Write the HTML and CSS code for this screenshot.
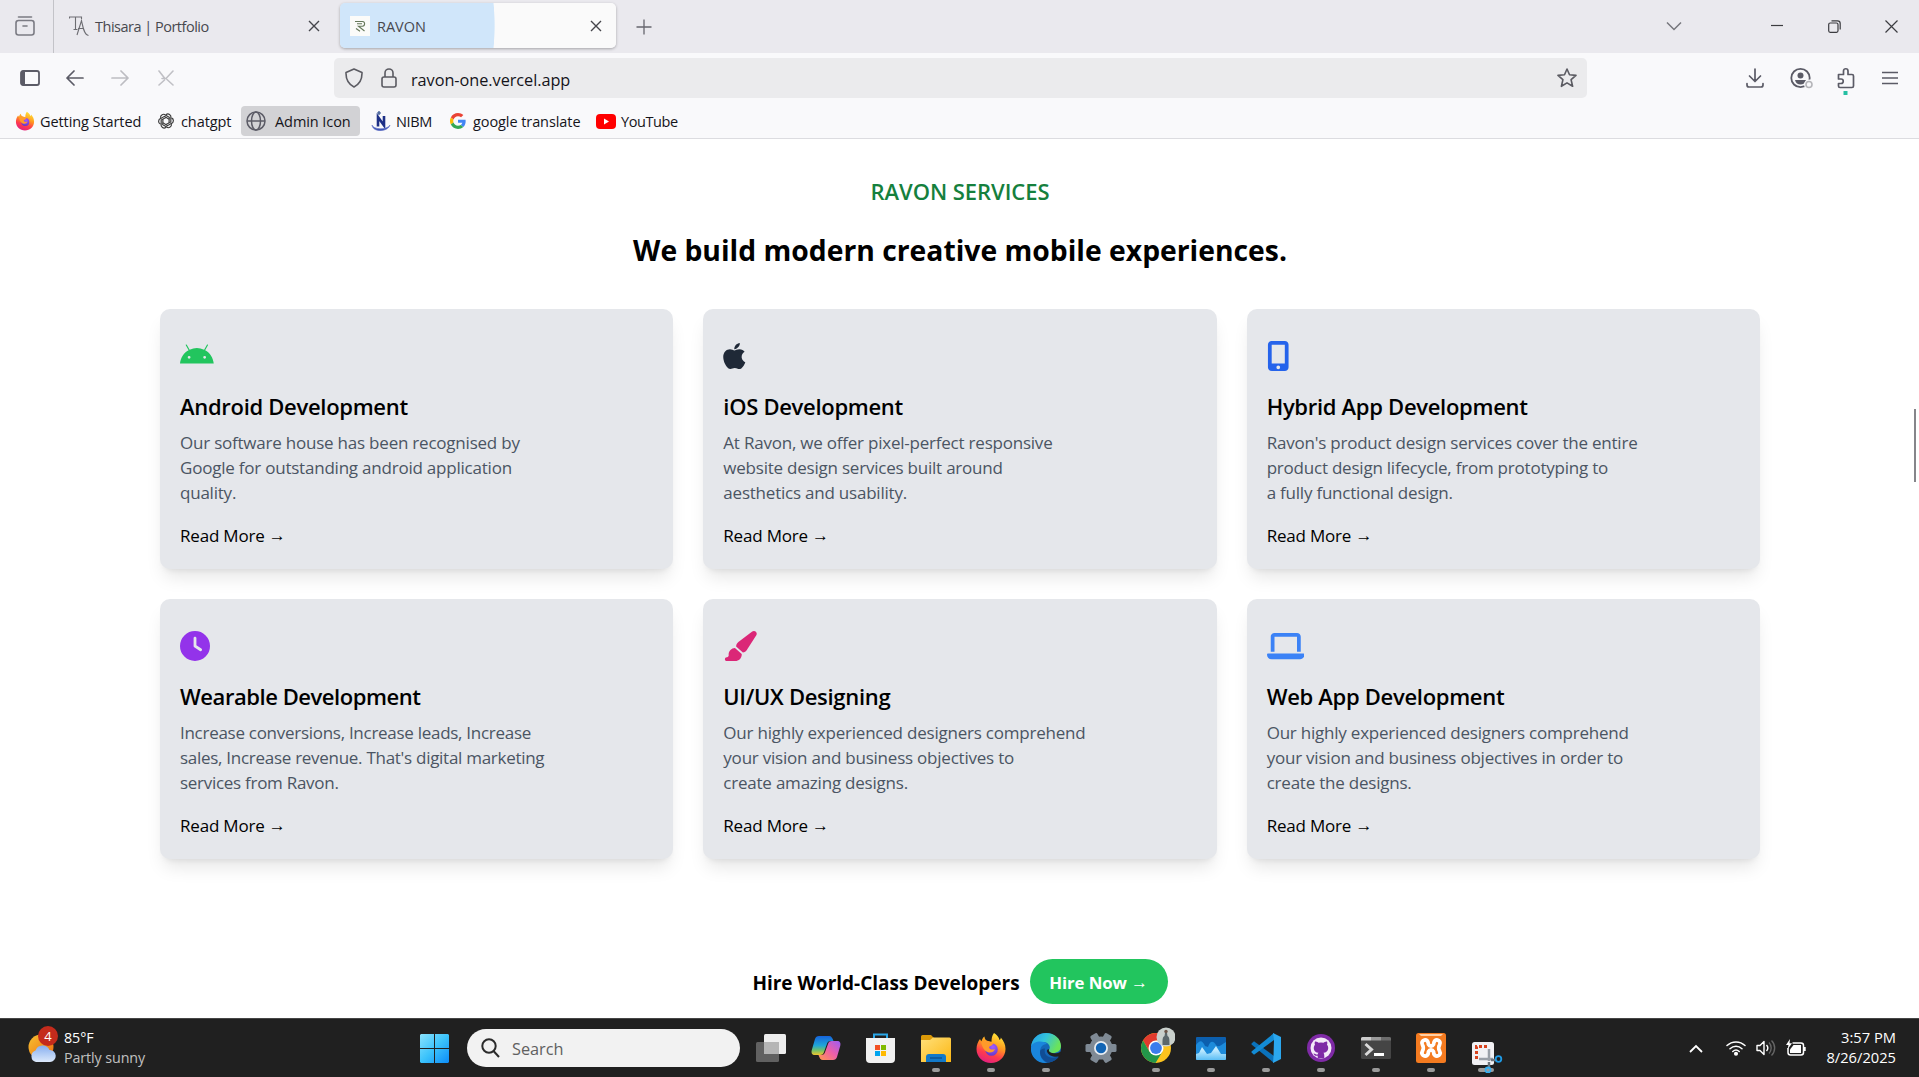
FILE: index.html
```html
<!DOCTYPE html>
<html lang="en">
<head>
<meta charset="utf-8">
<title>RAVON</title>
<link rel="stylesheet" href="styles.css">
</head>
<body>
<svg class="defs" width="0" height="0">
  <defs>
    <linearGradient id="gFire" x1="0.7" y1="0" x2="0.3" y2="1"><stop offset="0" stop-color="#ffe83a"/><stop offset=".4" stop-color="#ff9a1f"/><stop offset=".7" stop-color="#ff3c4c"/><stop offset="1" stop-color="#e01d84"/></linearGradient>
    <radialGradient id="gGlobe" cx=".6" cy=".3" r=".8"><stop offset="0" stop-color="#a35bff"/><stop offset="1" stop-color="#5b35c4"/></radialGradient>
    <symbol id="firefox" viewBox="0 0 30 32">
      <path fill="url(#gFire)" d="M18 1c3 2 5 4 5.500 7 1-.5 1.300-1.500 1.300-2.500 3 3.500 4.700 7 4.700 11.500C29.500 25 23 31 15 31S.5 25 .5 17c0-4 1.500-7.500 3.500-10 .3 1 .8 1.800 1.600 2.200C6 7 7 5.500 8.500 4.500c0 2 1 3.500 3 4.500l4 .7C15.500 6.500 16 3.500 18 1z"/>
      <circle cx="15.500" cy="17.500" r="6.300" fill="url(#gGlobe)"/>
      <path fill="#ff9a2a" d="M5 10.500c3-2.500 7.500-2 9.500 0l3 .8c-1 2.200-3 2.700-4 3.200-.8.500-.5 2 1 2.700 1.500.6 3 .2 4.500-.3-1 3.500-5.500 4.500-8.500 2.600C7 17.500 6 13 5 10.500z"/>
    </symbol>
  </defs>
</svg>

<div class="tabstrip">
  <div class="view-btn">
    <svg width="20" height="20" viewBox="0 0 20 20" fill="none" stroke="#7b7b83" stroke-width="1.600" stroke-linecap="round"><path d="M3.500 1h13"/><rect x="1" y="4.500" width="18" height="14.500" rx="2.500"/><path d="M8 10h4"/></svg>
  </div>
  <div class="tab">
    <svg width="20" height="22" viewBox="0 0 20 22" fill="none" stroke="#6d6d72" stroke-width="1.100"><path d="M.5 3.500V2h12v2M6.500 2v12M4.500 14.500h4M8 20l4.500-14.500C14 12 15 20 19.500 20.500M9 13.500h6"/></svg>
    <span class="tab-label">Thisara | Portfolio</span>
    <svg class="close" width="12" height="12" viewBox="0 0 12 12" stroke="#45454b" stroke-width="1.400"><path d="M1 1l10 10M11 1L1 11"/></svg>
  </div>
  <div class="tab active">
    <svg width="20" height="20" viewBox="0 0 20 20" fill="none" stroke="#66785a" stroke-width="1.100"><rect width="20" height="20" fill="#fbfbf9" stroke="none"/><path d="M5 5.500h7.500c2.800 0 2.800 4.700 0 4.700H8.500l6 4.800M7 7.800h5M6 12.500l4 2.700"/></svg>
    <span class="tab-label">RAVON</span>
    <svg class="close" width="12" height="12" viewBox="0 0 12 12" stroke="#45454b" stroke-width="1.400"><path d="M1 1l10 10M11 1L1 11"/></svg>
  </div>
  <svg class="plus" width="16" height="16" viewBox="0 0 16 16" stroke="#66666e" stroke-width="1.300"><path d="M8 .5v15M.5 8h15"/></svg>
  <div class="win">
    <svg width="16" height="10" viewBox="0 0 16 10" fill="none" stroke="#76767c" stroke-width="1.500"><path d="M1 1.500l7 7 7-7"/></svg>
    <svg class="w-min" width="12" height="12" viewBox="0 0 12 12" stroke="#3c3c40" stroke-width="1.200"><path d="M0 5.500h12"/></svg>
    <svg width="13" height="13" viewBox="0 0 13 13" fill="none" stroke="#3c3c40" stroke-width="1.200"><rect x=".7" y="3" width="9.300" height="9.300" rx="1.500"/><path d="M3.500.8H9.500a2.700 2.700 0 0 1 2.700 2.700v6"/></svg>
    <svg width="13" height="13" viewBox="0 0 13 13" stroke="#3c3c40" stroke-width="1.200"><path d="M.5.500l12 12M12.500.500l-12 12"/></svg>
  </div>
</div>

<div class="toolbar">
  <div class="nav">
    <svg width="20" height="16" viewBox="0 0 20 16" fill="none" stroke="#5b5b66" stroke-width="1.800"><rect x="1" y="1" width="18" height="14" rx="2"/><path d="M3 1.500v13" stroke-width="4"/></svg>
    <svg width="18" height="16" viewBox="0 0 18 16" fill="none" stroke="#5b5b66" stroke-width="1.700" stroke-linecap="round" stroke-linejoin="round"><path d="M17 8H1M8 1L1 8l7 7"/></svg>
    <svg width="18" height="16" viewBox="0 0 18 16" fill="none" stroke="#bdbdc2" stroke-width="1.700" stroke-linecap="round" stroke-linejoin="round"><path d="M1 8h16M10 1l7 7-7 7"/></svg>
    <svg width="16" height="16" viewBox="0 0 16 16" fill="none" stroke="#c0c0c5" stroke-width="1.600" stroke-linecap="round"><path d="M1 1l5.500 7M9 9.500l6 5.500M15 1L8 8.500H4M6.500 10L1 15"/></svg>
  </div>
  <div class="urlbar">
    <svg width="18" height="20" viewBox="0 0 18 20" fill="none" stroke="#5b5b62" stroke-width="1.600" stroke-linejoin="round"><path d="M9 1l8 3.500c.2 6-2 11.500-8 14.500C3 16 .8 10.500 1 4.500z"/></svg>
    <svg class="lock" width="16" height="20" viewBox="0 0 16 20" fill="none" stroke="#5b5b62" stroke-width="1.600"><rect x="1" y="9" width="14" height="10" rx="2"/><path d="M4 9V5a4 4 0 0 1 8 0v4"/></svg>
    <span class="url">ravon-one.vercel.app</span>
    <svg class="star" width="20" height="20" viewBox="0 0 20 20" fill="none" stroke="#5b5b62" stroke-width="1.600" stroke-linejoin="round"><path d="M10 1l2.500 5.800 6.500.6-4.900 4.300 1.500 6.600-5.600-3.400-5.600 3.400 1.500-6.600L1 7.400l6.500-.6z"/></svg>
  </div>
  <div class="tools">
    <svg width="18" height="20" viewBox="0 0 18 20" fill="none" stroke="#5b5b66" stroke-width="1.700" stroke-linecap="round" stroke-linejoin="round"><path d="M9 1v12M3.500 8L9 13.500 14.500 8M1 15.500v1.500a2 2 0 0 0 2 2h12a2 2 0 0 0 2-2v-1.500"/></svg>
    <svg width="24" height="22" viewBox="0 0 24 22" fill="none"><circle cx="10.500" cy="11" r="9.200" stroke="#5b5b66" stroke-width="1.800"/><circle cx="10.500" cy="8.500" r="3" fill="#5b5b66"/><path d="M5 13h11c-.5 3-3 4.500-5.500 4.500S5.500 16 5 13z" fill="#5b5b66"/><circle cx="19" cy="17.500" r="5" fill="#f9f9fb"/><circle cx="19" cy="17.500" r="3" stroke="#b5b5b9" stroke-width="1.600"/></svg>
    <svg width="18" height="28" viewBox="0 0 18 28" fill="none" stroke="#5b5b66" stroke-width="1.700" stroke-linejoin="round"><path d="M1.500 7.500h5V4a2.200 2.200 0 0 1 4.500 0v3.500h4a1.500 1.500 0 0 1 1.500 1.500v10a1.500 1.500 0 0 1-1.500 1.500H3A1.500 1.500 0 0 1 1.500 19v-2.500H4a2.200 2.200 0 0 0 0-4.500H1.500z"/><rect x="6.500" y="24" width="4" height="4" fill="#26bfa3" stroke="none"/></svg>
    <svg width="16" height="14" viewBox="0 0 16 14" stroke="#5b5b66" stroke-width="1.500"><path d="M0 1.500h16M0 7h16M0 12.500h16"/></svg>
  </div>
</div>

<div class="bookmarks">
  <div class="bm bm-1"><svg width="20" height="20"><use href="#firefox"/></svg><span>Getting Started</span></div>
  <div class="bm bm-2"><svg width="20" height="20" viewBox="-2 -2 24 24" fill="none" stroke="#3a3a3a" stroke-width="1.400"><g id="petal"><path d="M10 2.500a3.600 3.600 0 0 1 5.800 3.700v5L10 14.200"/></g><use href="#petal" transform="rotate(60 10 10)"/><use href="#petal" transform="rotate(120 10 10)"/><use href="#petal" transform="rotate(180 10 10)"/><use href="#petal" transform="rotate(240 10 10)"/><use href="#petal" transform="rotate(300 10 10)"/></svg><span>chatgpt</span></div>
  <div class="bm bm-3"><svg width="20" height="20" viewBox="0 0 20 20" fill="none" stroke="#5b5b66" stroke-width="1.500"><circle cx="10" cy="10" r="9"/><ellipse cx="10" cy="10" rx="4.500" ry="9"/><path d="M1 10h18"/></svg><span>Admin Icon</span></div>
  <div class="bm bm-4"><svg width="20" height="20" viewBox="0 0 20 20"><path d="M7 15.500V6l6 8.500V5" fill="none" stroke="#1d2f86" stroke-width="2.600"/><path d="M8 0v4M6 2h4" stroke="#2b4a8a" stroke-width="1.200"/><path d="M1 14c1 4.500 15 5.500 18 0-2 7-17 8-18 0z" fill="#3f55b5" stroke="#5a6cc4" stroke-width=".6"/></svg><span>NIBM</span></div>
  <div class="bm bm-5"><svg width="16" height="16" viewBox="0 0 48 48"><path fill="#ea4335" d="M24 9.500c3.500 0 6.700 1.200 9.200 3.600l6.900-6.900C35.900 2.400 30.500 0 24 0 14.600 0 6.500 5.400 2.600 13.200l8 6.200C12.400 13.700 17.700 9.500 24 9.500z"/><path fill="#4285f4" d="M47 24.500c0-1.600-.2-3.100-.4-4.500H24v9h12.900c-.6 3-2.200 5.500-4.700 7.200l7.700 6C44.400 38 47 31.800 47 24.500z"/><path fill="#fbbc05" d="M10.500 28.600a14.500 14.500 0 0 1 0-9.200l-8-6.200a24 24 0 0 0 0 21.600z"/><path fill="#34a853" d="M24 48c6.500 0 11.900-2.100 15.900-5.800l-7.700-6c-2.200 1.500-4.900 2.300-8.200 2.300-6.300 0-11.600-4.200-13.500-9.900l-8 6.200C6.500 42.600 14.600 48 24 48z"/></svg><span>google translate</span></div>
  <div class="bm bm-6"><svg width="20" height="15" viewBox="0 0 20 15"><rect width="20" height="15" rx="4" fill="#f00"/><path d="M8 4.500v6l5-3z" fill="#fff"/></svg><span>YouTube</span></div>
</div>

<main class="page">
  <div class="eyebrow">RAVON SERVICES</div>
  <h1 class="headline">We build modern creative mobile experiences.</h1>
  <section class="grid">
    <article class="card">
      <svg class="icon android" viewBox="0 0 576 512"><path d="M420.550,301.930a24,24,0,1,1,24-24,24,24,0,0,1-24,24m-265.100,0a24,24,0,1,1,24-24,24,24,0,0,1-24,24m273.700-144.480,47.940-83a10,10,0,1,0-17.270-10h0l-48.540,84.070a301.250,301.250,0,0,0-246.560,0L116.180,64.450a10,10,0,1,0-17.270,10h0l47.940,83C64.530,202.220,8.240,285.550,0,384H576c-8.240-98.450-64.540-181.780-146.850-226.550"/></svg>
      <h2>Android Development</h2>
      <p>Our software house has been recognised by<br>Google for outstanding android application<br>quality.</p>
      <a>Read More <span class="arr">→</span></a>
    </article>
    <article class="card">
      <svg class="icon apple" viewBox="0 0 384 512"><path d="M318.700 268.700c-.2-36.700 16.400-64.400 50-84.800-18.800-26.900-47.200-41.700-84.700-44.600-35.500-2.800-74.300 20.700-88.500 20.700-15 0-49.400-19.700-76.400-19.700C63.300 141.200 4 184.800 4 273.500q0 39.300 14.400 81.200c12.800 36.700 59 126.700 107.200 125.200 25.200-.6 43-17.900 75.800-17.900 31.800 0 48.300 17.900 76.400 17.900 48.600-.7 90.400-82.500 102.600-119.300-65.200-30.700-61.700-90-61.700-91.900zm-56.600-164.200c27.300-32.400 24.800-61.900 24-72.500-24.100 1.400-52 16.400-67.900 34.900-17.500 19.800-27.800 44.300-25.600 71.900 26.100 2 49.900-11.400 69.500-34.300z"/></svg>
      <h2>iOS Development</h2>
      <p>At Ravon, we offer pixel-perfect responsive<br>website design services built around<br>aesthetics and usability.</p>
      <a>Read More <span class="arr">→</span></a>
    </article>
    <article class="card">
      <svg class="icon mobile" viewBox="0 0 384 512"><path d="M16 64C16 28.700 44.700 0 80 0H304c35.300 0 64 28.700 64 64V448c0 35.300-28.700 64-64 64H80c-35.300 0-64-28.700-64-64V64zM224 448a32 32 0 1 0 -64 0 32 32 0 1 0 64 0zM304 64H80V384H304V64z"/></svg>
      <h2>Hybrid App Development</h2>
      <p>Ravon's product design services cover the entire<br>product design lifecycle, from prototyping to<br>a fully functional design.</p>
      <a>Read More <span class="arr">→</span></a>
    </article>
    <article class="card">
      <svg class="icon clock" viewBox="0 0 512 512"><path d="M256 0a256 256 0 1 1 0 512A256 256 0 1 1 256 0zM232 120V256c0 8 4 15.500 10.700 20l96 64c11 7.400 25.900 4.400 33.300-6.700s4.400-25.900-6.700-33.300L280 243.200V120c0-13.300-10.700-24-24-24s-24 10.700-24 24z"/></svg>
      <h2 class="tight">Wearable Development</h2>
      <p class="tight">Increase conversions, Increase leads, Increase<br>sales, Increase revenue. That's digital marketing<br>services from Ravon.</p>
      <a>Read More <span class="arr">→</span></a>
    </article>
    <article class="card">
      <svg class="icon brush" viewBox="0 0 576 512"><path d="M339.300 367.100c27.300-3.900 51.900-19.400 67.200-42.900L568.200 74.100c12.600-19.500 9.400-45.300-7.600-61.200S517.700-4.400 499.100 9.600L262.400 187.200c-24 18-38.200 46.100-38.400 76.100L339.300 367.100zm-19.600 25.400l-116-104.400C143.900 290.300 96 339.600 96 400c0 3.900 .2 7.800 .6 11.600C98.400 429.100 86.400 448 68.800 448H64c-17.700 0-32 14.300-32 32s14.300 32 32 32H208c61.900 0 112-50.100 112-112c0-2.500-.1-5-.2-7.500z"/></svg>
      <h2>UI/UX Designing</h2>
      <p>Our highly experienced designers comprehend<br>your vision and business objectives to<br>create amazing designs.</p>
      <a>Read More <span class="arr">→</span></a>
    </article>
    <article class="card">
      <svg class="icon laptop" viewBox="0 0 640 512"><path d="M128 32C92.700 32 64 60.700 64 96V352h64V96H512V352h64V96c0-35.300-28.700-64-64-64H128zM19.200 384C8.600 384 0 392.600 0 403.200C0 445.600 34.400 480 76.800 480H563.200c42.400 0 76.800-34.400 76.800-76.800c0-10.600-8.600-19.200-19.200-19.200H19.200z"/></svg>
      <h2>Web App Development</h2>
      <p>Our highly experienced designers comprehend<br>your vision and business objectives in order to<br>create the designs.</p>
      <a>Read More <span class="arr">→</span></a>
    </article>
  </section>
  <div class="hire">
    <span class="hire-text">Hire World-Class Developers</span>
    <button class="hire-btn">Hire Now <span class="arr">→</span></button>
  </div>
  <div class="scroll-thumb"></div>
</main>

<footer class="taskbar">
  <div class="weather">
    <div class="weather-icon">
      <svg width="28" height="30" viewBox="0 0 28 30"><defs><linearGradient id="sun" x1="0" y1="0" x2="1" y2="1"><stop offset="0" stop-color="#f5c131"/><stop offset="1" stop-color="#f0690f"/></linearGradient><linearGradient id="cl" x1="0" y1="0" x2="0" y2="1"><stop offset="0" stop-color="#86aef0"/><stop offset="1" stop-color="#dce9fb"/></linearGradient></defs><circle cx="13" cy="14" r="12.500" fill="url(#sun)"/><path d="M8 29a6 6 0 0 1-.5-11.500 7.500 7.500 0 0 1 14-.5A6 6 0 0 1 22 29z" fill="url(#cl)"/></svg>
      <span class="badge">4</span>
    </div>
    <div class="weather-text"><span>85°F</span><span class="dim">Partly sunny</span></div>
  </div>
  <svg class="start" width="29" height="29" viewBox="0 0 29 29"><defs><linearGradient id="win" gradientUnits="userSpaceOnUse" x1="0" y1="0" x2="29" y2="29"><stop offset="0" stop-color="#8be3fd"/><stop offset=".5" stop-color="#3cc3fb"/><stop offset="1" stop-color="#0c8cf8"/></linearGradient></defs><path fill="url(#win)" d="M1 0h13v14H0V1zM15 0h13l1 1v13H15zM0 15h14v14H1l-1-1zM15 15h14v13l-1 1H15z"/></svg>
  <div class="search">
    <svg width="19" height="20" viewBox="0 0 19 20" fill="none" stroke="#2b2b2b" stroke-width="2"><circle cx="8" cy="8" r="6.700"/><path d="M12.500 13l5.500 6"/></svg>
    <span>Search</span>
  </div>
  <div class="apps">
    <div class="app"><svg width="32" height="32" viewBox="0 0 32 32"><rect x="9" y="2" width="22" height="20" rx="1.500" fill="#ededed"/><rect x="1" y="10" width="23" height="20" rx="1.500" fill="#777" fill-opacity=".75"/><path d="M9 10h15v12H9z" fill="#b5b5b5"/></svg></div>
    <div class="app"><svg width="32" height="32" viewBox="0 0 32 32"><defs><linearGradient id="cpA" x1="0" y1="0" x2="0" y2="1"><stop offset="0" stop-color="#1663dc"/><stop offset=".5" stop-color="#1fa6d8"/><stop offset=".75" stop-color="#6fc06b"/><stop offset="1" stop-color="#f0c52c"/></linearGradient><linearGradient id="cpB" x1="1" y1="0" x2="0" y2="1"><stop offset="0" stop-color="#9b5cf5"/><stop offset=".5" stop-color="#ee5fa8"/><stop offset="1" stop-color="#ff9a4a"/></linearGradient></defs><path d="M9 4h10c2.500 0 3.500 2 4.500 5h-3c-2 0-3 1-3.600 3L14 20c-.6 2-1.500 3-4 3H5c-3 0-4-2-3.200-5L5 7c.6-2 2-3 4-3z" fill="url(#cpA)"/><path d="M23 28H13c-2.500 0-3.500-2-4.500-5h3c2 0 3-1 3.600-3L18 12c.6-2 1.500-3 4-3h5c3 0 4 2 3.200 5L27 25c-.6 2-2 3-4 3z" fill="url(#cpB)"/></svg></div>
    <div class="app"><svg width="32" height="32" viewBox="0 0 32 32"><path d="M9 8V2.500h13V8" fill="none" stroke="#2aa7e8" stroke-width="2"/><path d="M1 6h29v21a4 4 0 0 1-4 4H5a4 4 0 0 1-4-4z" fill="#f1f1f1"/><path fill="#f25022" d="M10 13h5v5h-5z"/><path fill="#7fba00" d="M16 13h5v5h-5z"/><path fill="#00a4ef" d="M10 19h5v5h-5z"/><path fill="#ffb900" d="M16 19h5v5h-5z"/></svg></div>
    <div class="app on"><svg width="32" height="32" viewBox="0 0 32 32"><defs><linearGradient id="fo" x1="0" y1="0" x2="1" y2="1"><stop offset="0" stop-color="#ffe07a"/><stop offset="1" stop-color="#fcb713"/></linearGradient></defs><path d="M1 4.500A1.500 1.500 0 0 1 2.500 3H11l3 3v6H1z" fill="#dc9a08"/><path d="M1 8h9l3-2.500h16.500A1.500 1.500 0 0 1 31 7v23H1z" fill="url(#fo)"/><path d="M6 30v-5a3 3 0 0 1 3-3h14a3 3 0 0 1 3 3v5z" fill="#1279c9"/><path d="M10 26h12" stroke="#0b4c8c" stroke-width="1.300"/></svg></div>
    <div class="app on"><svg width="30" height="32"><use href="#firefox"/></svg></div>
    <div class="app on"><svg width="32" height="32" viewBox="0 0 32 32"><defs><linearGradient id="eg" x1="0" y1="0" x2="1" y2=".4"><stop offset="0" stop-color="#239be8"/><stop offset=".5" stop-color="#33c3dc"/><stop offset="1" stop-color="#6be35a"/></linearGradient></defs><circle cx="16" cy="16" r="15" fill="#1467b8"/><path d="M1 15C2 6 8 1 16 1c9 0 15 6 15 13 0 5-4 7-8 7-3 0-5-1-4-3 2-3 0-8-6-8C7 10 2 12 1 15z" fill="url(#eg)"/><path d="M1 15c2-6 12-7 16-3-5 0-7 4-7 8 0 5 3 9 7 11C8 32 0 25 1 15z" fill="#1a86dc"/><path d="M10 20c0 5 4 10 9 10.600 4-.5 8-3 10-6-8 3-16 0-14-8-3 0-5 1.500-5 3.400z" fill="#104d95"/><path d="M19 17.500c-1 3 4 4.500 9 3.500l4-2-1.500 5c-5 2-12 0-13.500-4.500-.4-1.500 1-3 2-2z" fill="#202020"/></svg></div>
    <div class="app"><svg width="32" height="32" viewBox="0 0 32 32"><g fill="#7f8a95"><circle cx="16" cy="16" r="11.500"/><rect id="teeth" x="12" y=".5" width="8" height="31" rx="1.500" transform="rotate(90 16 16)"/><use href="#teeth" transform="rotate(60 16 16)"/><use href="#teeth" transform="rotate(120 16 16)"/></g><circle cx="16" cy="16" r="7" fill="#e8edf2"/><circle cx="16" cy="16" r="5.200" fill="#1265b5"/></svg></div>
    <div class="app on"><svg class="chrome" width="36" height="38" viewBox="-2 -5 36 38"><circle cx="15" cy="16" r="15" fill="#fcc31e"/><path d="M15 8.500h13A15 15 0 0 0 2 8.500l6.500 11z" fill="#e23b2e"/><path d="M2 8.500A15 15 0 0 0 14.500 31l7-11.500L8.500 19.700z" fill="#23974a"/><circle cx="15" cy="16" r="7.500" fill="#fff"/><circle cx="15" cy="16" r="5.900" fill="#3b7ded"/><circle cx="25" cy="5" r="9.500" fill="#c9d0cc"/><path d="M21.500 13c0-6 0-8 2-9l.5-3h2l.5 3c2 1 2 3 2 9z" fill="#5b676b"/><circle cx="25" cy="-.5" r="1.700" fill="#6c5548"/></svg></div>
    <div class="app on"><svg width="32" height="32" viewBox="0 0 32 32"><defs><linearGradient id="pm" x1="0" y1="0" x2="0" y2="1"><stop offset=".3" stop-color="#bfeaff"/><stop offset="1" stop-color="#5bbef5"/></linearGradient></defs><rect x="1" y="5" width="30" height="23" rx="1" fill="#0c5fae"/><path d="M1 13c4-5 6-5 9 1l3 1c2-6 5-7 8-2 2 3 5 0 10-3v14H1z" fill="#1d8bdb"/><path d="M1 22l3-1 3-6 5 7 4-1 5-7 5 8h5v5a1 1 0 0 1-1 1H2a1 1 0 0 1-1-1z" fill="url(#pm)"/></svg></div>
    <div class="app on"><svg width="32" height="32" viewBox="0 0 32 32"><path d="M1.500 11.500L4 9.300 24 24v7L1.500 12.500z" fill="#0a72bb"/><path d="M1.500 20.500L4 22.700 24 8V1L1.500 19.500z" fill="#138bd4"/><path d="M23 1l1 7-.5 16L23 31l8-4V5z" fill="#2ba7ee"/></svg></div>
    <div class="app on"><svg width="30" height="30" viewBox="0 0 30 30"><circle cx="15" cy="15" r="14" fill="#7f2aa6"/><circle cx="15" cy="15" r="10.500" fill="#f4eaf8"/><path d="M9 8.500c2-.2 3 .8 3.600 1.200a11 11 0 0 1 4.800 0C18 9.300 19.500 8.300 21 8.500c.5 1.300.4 2.300 0 3.200 2.300 2.700 1.500 7.600-3.500 8.100.9 1 .8 3 .8 5.200h-6.600v-2.300c-2.600.5-3.500-.7-4.200-2.300 1.800-.2 2.200 1.500 4.200 1 0-.7.300-1.200.8-1.600-5-.5-5.800-5.400-3.500-8.100-.4-.9-.5-1.900 0-3.200z" fill="#7f2aa6"/></svg></div>
    <div class="app on"><svg width="32" height="32" viewBox="0 0 32 32"><rect x="1" y="5" width="30" height="22" rx="1.500" fill="#454545"/><path d="M1 8.500V6.500A1.500 1.500 0 0 1 2.500 5H11v3.500z" fill="#ccc"/><path d="M11 5h10v3.500H11z" fill="#9a9a9a"/><path d="M21 5h8.500A1.500 1.500 0 0 1 31 6.500v2H21z" fill="#6c6c6c"/><path d="M5.500 12l6 5.500-6 5.500" fill="none" stroke="#d9d9d9" stroke-width="3"/><path d="M14 22.500h10" stroke="#fff" stroke-width="3"/></svg></div>
    <div class="app on"><svg width="32" height="32" viewBox="0 0 32 32"><rect x="1" y="1" width="30" height="30" rx="2.500" fill="#f47b20"/><path d="M4 2h24l-2 2H6z" fill="#ffd0a5"/><path d="M13.500 12.500C13.500 5 4.500 8 7.500 13c1 1.500 1 4.500 0 6-3 5 6 8 6 .5 1-2 4-2 5 0 0 7.500 9 4.500 6-.5-1-1.500-1-4.500 0-6 3-5-6-8-6-.5-1 2-4 2-5 0z" fill="none" stroke="#fff" stroke-width="3.800" stroke-linejoin="round"/></svg></div>
    <div class="app wide"><svg width="34" height="34" viewBox="0 0 34 34"><rect x="3" y="3" width="22" height="23" rx="2.500" fill="#f1f1f4"/><path d="M7.500 20V7.500H20" fill="none" stroke="#d8431f" stroke-width="3" stroke-dasharray="3 2"/><path d="M20 10v12M10 20h14" stroke="#9aa0a8" stroke-width="2.500"/><path d="M22 21h5M20 23v5" stroke="#6d747c" stroke-width="2.500"/><circle cx="29.500" cy="20" r="2.800" fill="none" stroke="#1f9be6" stroke-width="1.800"/><circle cx="19" cy="31" r="2.500" fill="none" stroke="#35aef0" stroke-width="1.800"/></svg></div>
  </div>
  <div class="tray">
    <svg class="t-chev" width="14" height="9" viewBox="0 0 14 9" fill="none" stroke="#fff" stroke-width="1.800"><path d="M1 8l6-6 6 6"/></svg>
    <svg class="t-wifi" width="20" height="16" viewBox="0 0 20 16" fill="none" stroke="#fff" stroke-width="1.500" stroke-linecap="round"><path d="M1 5.500a13 13 0 0 1 18 0M4 8.700a8.800 8.800 0 0 1 12 0M6.800 11.500a4.800 4.800 0 0 1 6.400 0"/><circle cx="10" cy="13.700" r="1.300" fill="#fff"/></svg>
    <svg class="t-vol" width="20" height="18" viewBox="0 0 20 18" fill="none" stroke="#fff" stroke-width="1.400"><path d="M1 6.500h3L8 2.500v13l-4-4H1z" stroke-linejoin="round"/><path d="M10.500 6a4.500 4.500 0 0 1 0 6"/><path d="M13 3.500a8 8 0 0 1 0 11M15.500 1.500a10.500 10.500 0 0 1 0 15" stroke="#666"/></svg>
    <svg class="t-bat" width="20" height="18" viewBox="0 0 20 18"><path d="M6.500 4H15a2.500 2.500 0 0 1 2.500 2.500v7A2.500 2.500 0 0 1 15 16H4.500A2.500 2.500 0 0 1 2 13.500V9" fill="none" stroke="#fff" stroke-width="1.500"/><path d="M7.500 6H15v8H4v-3.500z" fill="#fff"/><path d="M18 8h1.700v4H18zM4 0L0 6h2.500L1.500 10.500 6 4.300H3.500z" fill="#fff"/></svg>
    <div class="clock-text"><span>3:57 PM</span><span>8/26/2025</span></div>
  </div>
</footer>
</body>
</html>
```
FILE: styles.css
```css
* { box-sizing: border-box; }
body {
  margin: 0;
  width: 1919px;
  height: 1077px;
  overflow: hidden;
  display: flex;
  flex-direction: column;
  background: #fff;
  font-family: "Open Sans", "Noto Sans", sans-serif;
  color: #15141a;
}
svg { display: block; flex: none; }
.defs { position: absolute; }
span { white-space: nowrap; }

/* tab strip */
.tabstrip { height: 53px; flex: none; display: flex; background: #eae9ee; align-items: flex-start; }
.view-btn { width: 54px; height: 53px; border-right: 1px solid #c3c3c8; padding: 16px 0 0 15px; }
.tab { display: flex; align-items: center; height: 45px; margin-top: 3px; font-size: 14.500px; color: #48484e; width: 276px; padding: 0 14px 0 10px; }
.tab:not(.active) { margin-left: 5px; padding-left: 10px; padding-right: 15px; }
.tab-label { margin-left: 6px; flex: 1; letter-spacing: -0.5px; padding-top: 1px; }
.tab.active { margin-left: 5px; border-radius: 5px; background: radial-gradient(ellipse 400px 300px at -245px 50%, #d0e6fa 0 99.8%, #fafafa 100%); box-shadow: 0 1px 3px rgba(0,0,0,.3); }
.active .tab-label { letter-spacing: 0; margin-left: 7px; }
.plus { margin: 19px 0 0 20px; }
.win { margin-left: auto; display: flex; align-items: center; height: 52px; padding-right: 21px; }
.w-min { margin: 0 45px 0 89px; }
.win svg:nth-child(3) { margin-right: 44px; }

/* toolbar */
.toolbar { height: 50px; flex: none; display: flex; background: #f9f9fb; padding-top: 5px; align-items: flex-start; }
.nav { width: 334px; height: 40px; display: flex; align-items: center; padding-left: 20px; }
.nav svg:nth-child(2) { margin-left: 26px; }
.nav svg:nth-child(3) { margin-left: 27px; }
.nav svg:nth-child(4) { margin-left: 29px; }
.urlbar { width: 1253px; height: 40px; border-radius: 5px; background: #ebebed; display: flex; align-items: center; padding: 0 10px 0 11px; }
.lock { margin-left: 18px; }
.url { margin-left: 14px; flex: 1; font-size: 16.300px; letter-spacing: -0.05px; padding-top: 3px; }
.tools { display: flex; align-items: center; height: 40px; margin-left: 159px; }
.tools svg:nth-child(2) { margin-left: 26px; }
.tools svg:nth-child(3) { margin-left: 23px; margin-top: 6px; }
.tools svg:nth-child(4) { margin-left: 27px; }

/* bookmarks */
.bookmarks { height: 36px; flex: none; display: flex; background: #f9f9fb; border-bottom: 1px solid #dcdce0; padding: 3px 0 2px 10px; font-size: 14.500px; }
.bm { display: flex; align-items: center; height: 30px; gap: 5px; padding-left: 5px; }
.bm-1 { width: 141px; }
.bm-2 { width: 90px; }
.bm-3 { width: 119px; background: #d2d2d5; border-radius: 4px; gap: 9px; }
.bm-4 { width: 80px; padding-left: 11px; }
.bm-5 { width: 146px; padding-left: 10px; gap: 7px; }
.bm-6 { padding-left: 10px; }
.bm span { letter-spacing: -0.08px; }
.bm-4 span, .bm-6 span { letter-spacing: -0.4px; }

/* page */
.page { position: relative; flex: 1; padding: 37px 159px 0 160px; color: #000; }
.eyebrow { text-align: center; color: #15803d; font-weight: 600; font-size: 22px; line-height: 30px; letter-spacing: -0.05px; }
.headline { margin: 24px 0 0; text-align: center; font-weight: 700; font-size: 28.300px; line-height: 40px; }
.grid { margin-top: 39px; display: grid; grid-template-columns: repeat(3, 1fr); gap: 30px; }
.card { height: 260px; border-radius: 10px; background: #e5e7eb; padding: 32px 20px 0; box-shadow: 0 12px 18px -4px rgba(0,0,0,.1), 0 5px 7px -5px rgba(0,0,0,.1); }
.icon { height: 30px; }
.icon path { fill: currentColor; }
.android { color: #22c55e; }
.apple { color: #1f2937; }
.mobile { color: #2563eb; }
.clock { color: #9333ea; }
.brush { color: #db2777; }
.laptop { color: #3b82f6; }
.card h2 { margin: 18px 0 0; font-weight: 600; font-size: 22px; line-height: 35px; letter-spacing: -0.3px; }
.card h2.tight { letter-spacing: -0.45px; }
.card p { margin: 6px 0 0; font-size: 17px; letter-spacing: -0.22px; line-height: 25px; color: #4b5563; white-space: nowrap; }
.card p.tight { letter-spacing: -0.28px; }
.card a { display: block; margin-top: 18px; font-size: 17px; letter-spacing: -0.2px; line-height: 25px; }
.hire { margin-top: 100px; display: flex; justify-content: center; align-items: center; gap: 10px; }
.hire-text { font-weight: 700; font-size: 19px; padding-top: 2px; }
.hire-btn { width: 138px; height: 45px; border: 0; border-radius: 23px; background: #22c55e; color: #fff; font: 700 16.800px "Open Sans", sans-serif; padding: 1px 0 0; white-space: nowrap; letter-spacing: -0.1px; }
.arr { display: inline-block; font-family: "Liberation Sans", sans-serif; font-weight: 400; font-size: 17px; line-height: 16px; vertical-align: 1px; }
.scroll-thumb { position: absolute; left: 1914px; top: 270px; width: 2px; height: 73px; background: #85858a; }

/* taskbar */
.taskbar { height: 59px; flex: none; display: flex; background: #202020; border-top: 1px solid #454545; color: #fff; }
.weather { width: 420px; display: flex; padding: 7px 0 0 28px; }
.weather-icon { position: relative; padding-top: 7px; }
.badge { position: absolute; left: 10px; top: 0; width: 20px; height: 20px; border-radius: 50%; background: #c42b1c; font-size: 13px; line-height: 20px; text-align: center; }
.weather-text { margin-left: 8px; display: flex; flex-direction: column; font-size: 14.300px; line-height: 20px; padding-top: 2px; letter-spacing: -0.1px; }
.dim { color: #c0c0c0; }
.start { margin: 15px 0 0; }
.search { margin: 10px 0 0 18px; width: 273px; height: 38px; border-radius: 19px; background: #f2f2f2; display: flex; align-items: center; padding-left: 14px; gap: 12px; font-size: 16.300px; color: #606060; }
.search span { padding-top: 1px; }
.apps { display: flex; margin-left: 3px; }
.app { width: 55px; height: 58px; padding-top: 4px; position: relative; display: flex; align-items: center; justify-content: center; padding-bottom: 5px; }
.chrome { margin: -3px 0 0 3px; }
.app.on::after, .app.wide::after { content: ""; position: absolute; left: 24px; bottom: 5px; width: 8px; height: 4px; border-radius: 2px; background: #9a9a9a; }
.app.wide::after { left: 20px; width: 16px; z-index: -1; }
.app.wide { z-index: 0; padding-top: 15px; padding-bottom: 0; }
.tray { margin-left: auto; display: flex; align-items: center; padding-right: 23px; }
.t-wifi { margin-left: 23px; }
.t-vol { margin-left: 10px; }
.t-bat { margin-left: 10px; }
.clock-text { width: 90px; display: flex; flex-direction: column; text-align: right; font-size: 14.700px; line-height: 20px; padding-bottom: 2px; }
```
